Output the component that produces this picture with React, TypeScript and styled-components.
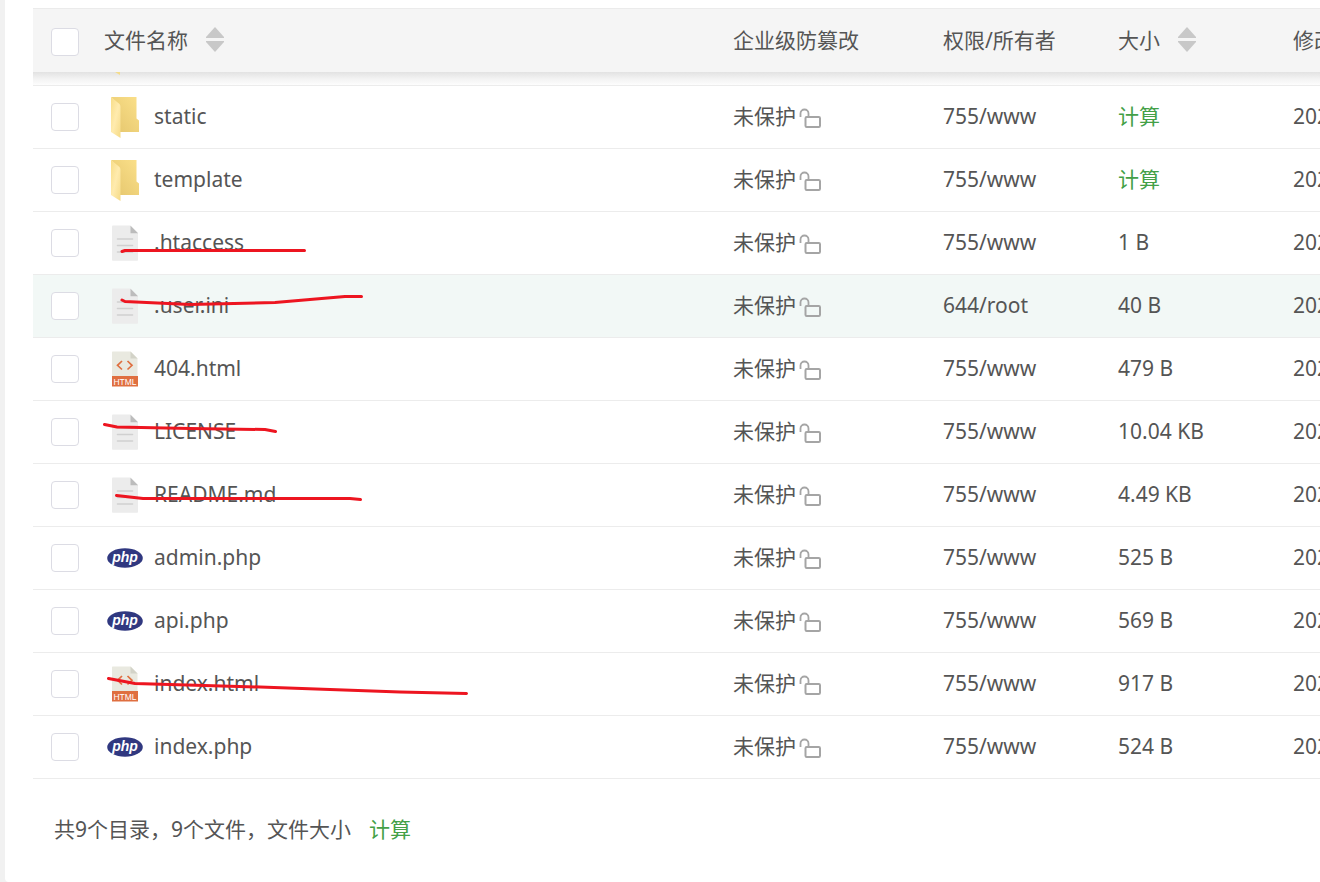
import React from "react";
import styled, { createGlobalStyle } from "styled-components";

const GlobalStyle = createGlobalStyle`
  *, *::before, *::after { box-sizing: border-box; }
  body {
    margin: 0;
    background: #f1f1f1;
    color: #555;
    font-family: "Noto Sans", "Noto Sans CJK SC", sans-serif;
    font-size: 21px;
    line-height: 28px;
    overflow-x: hidden;
  }
`;

const Panel = styled.main`
  min-height: 100vh;
  margin-left: 5px;
  padding: 8px 0 36px 28px;
  background: #fff;
  border-bottom-left-radius: 4px;
  overflow: hidden;
`;

const TableArea = styled.div`
  position: relative;
`;

const FileTable = styled.table`
  width: 100%;
  table-layout: fixed;
  border-collapse: separate;
  border-spacing: 0;
`;

const Column = styled.col<{ $width?: number }>`
  width: ${(p) => (p.$width ? `${p.$width}px` : "auto")};
`;

const HeadCell = styled.th<{ $box?: boolean }>`
  height: 64px;
  padding: ${(p) => (p.$box ? "2px 0 0" : "0 0 2px")};
  border-top: 1px solid #ebebeb;
  background: #f5f5f5;
  font-weight: 400;
  text-align: left;
  white-space: nowrap;
`;

const ScrolledCell = styled.td`
  height: 14px;
  padding: 0;
  border-bottom: 1px solid #ececec;
  background: linear-gradient(#e2e2e2, #f2f2f2 50%, #fdfdfd);
  vertical-align: top;
`;

const Row = styled.tr<{ $active?: boolean }>`
  background: ${(p) => (p.$active ? "#f2f8f6" : "#fff")};
`;

const Cell = styled.td`
  height: 63px;
  padding: 0;
  border-bottom: 1px solid #ececec;
  white-space: nowrap;
`;

const TextCell = styled(Cell)`
  padding-bottom: 2px;
`;

const CheckBox = styled.input`
  appearance: none;
  display: block;
  width: 28px;
  height: 28px;
  margin: 0 0 0 18px;
  border: 1px solid #dcdce4;
  border-radius: 4px;
  background: #fff;
  &:checked { background: #20a53a; }
`;

const SortLabel = styled.button`
  display: flex;
  align-items: center;
  gap: 18px;
  padding: 0;
  border: 0;
  background: none;
  color: inherit;
  font: inherit;
`;

const NameGroup = styled.div`
  display: flex;
  align-items: center;
  gap: 11px;
  padding-left: 3px;
`;

const FileLink = styled.a`
  padding-bottom: 2px;
  color: inherit;
  text-decoration: none;
`;

const GuardStatus = styled.div`
  display: flex;
  align-items: center;
  gap: 3px;
`;

const GuardText = styled.span`
  padding-bottom: 2px;
`;

const CalcLink = styled.a`
  color: #43a047;
  text-decoration: none;
`;

const Summary = styled.footer`
  display: flex;
  gap: 18px;
  padding: 36px 0 0 21px;
`;

const Marks = styled.svg`
  position: absolute;
  top: 0;
  left: 0;
  pointer-events: none;
`;

const Block = styled.svg`
  display: block;
  flex: none;
`;

function SortIcon() {
  return (
    <Block width="18" height="26" viewBox="0 0 18 26" fill="#c8c8c8" aria-hidden="true">
      <path d="M9 0 18 10v1H0v-1z" />
      <path d="M0 14h18v1L9 25 0 15z" />
    </Block>
  );
}

function UnlockIcon() {
  return (
    <Block width="22" height="22" viewBox="0 0 22 22" fill="none" stroke="#a5a5a5" strokeWidth="2" aria-hidden="true">
      <path d="M1.500 11V7.500a4 4 0 0 1 8 0V10" strokeWidth="1.8" />
      <rect x="6.500" y="11" width="14.500" height="10" rx="1.200" />
    </Block>
  );
}

function FolderIcon() {
  return (
    <Block width="36" height="42" viewBox="0 0 36 42" aria-hidden="true">
      <defs>
        <linearGradient id="folderBack" x1="0" y1="1" x2="1" y2="0">
          <stop offset="0" stopColor="#e4c56c" />
          <stop offset="1" stopColor="#fbe08a" />
        </linearGradient>
        <linearGradient id="folderFlap" x1="0" y1="0" x2="1" y2="1">
          <stop offset="0" stopColor="#f8dd88" />
          <stop offset="0.5" stopColor="#ffebae" />
          <stop offset="1" stopColor="#f5da86" />
        </linearGradient>
      </defs>
      <path d="M4 1h25.500v21.500l2.500 2V36H12V10z" fill="url(#folderBack)" />
      <path d="M4 1l8.500 7q1 1 1 3v31L4 36z" fill="url(#folderFlap)" />
    </Block>
  );
}

function TextFileIcon() {
  return (
    <Block width="36" height="36" viewBox="0 0 36 36" aria-hidden="true">
      <path d="M6 .5h17.500L31 8v27a.8.8 0 0 1-.8.800H5.800A.8.8 0 0 1 5 35V1.300Q5 .5 6 .5z" fill="#ececec" />
      <path d="M23.500.8 31 8.300h-7.500z" fill="#bcbcbc" />
      <path d="M10.500 14h15M10.500 20.500h15M10.500 27h15" stroke="#d0d0d0" strokeWidth="1.6" strokeLinecap="round" />
    </Block>
  );
}

function HtmlFileIcon() {
  return (
    <Block width="36" height="36" viewBox="0 0 36 36" aria-hidden="true">
      <path d="M5.500.5H23.500L30.500 7.500V25H5V1z" fill="#e9e9e0" />
      <path d="M23.500.5 30.500 7.500h-7z" fill="#d3d3c8" />
      <path d="M15 10l-4.500 4.300L15 18.500M20.500 10l4.500 4.300-4.500 4.200" fill="none" stroke="#df6f40" strokeWidth="1.700" />
      <path d="M5 25h26v10.500H5z" fill="#df6f40" />
      <text x="18" y="33.500" textAnchor="middle" fontFamily="Liberation Sans, sans-serif" fontSize="8.500" fill="#fff">HTML</text>
    </Block>
  );
}

function PhpIcon() {
  return (
    <Block width="36" height="36" viewBox="0 0 36 36" aria-hidden="true">
      <ellipse cx="18" cy="18" rx="17.800" ry="9.700" fill="#303880" />
      <text
        x="18"
        y="22"
        textAnchor="middle"
        fontFamily="Liberation Sans, sans-serif"
        fontSize="14"
        fontWeight="700"
        fontStyle="italic"
        fill="#fff"
      >
        php
      </text>
    </Block>
  );
}

const icons = { folder: FolderIcon, text: TextFileIcon, html: HtmlFileIcon, php: PhpIcon };

type FileEntry = {
  name: string;
  kind: keyof typeof icons;
  access: string;
  size?: string;
  active?: boolean;
};

const files: FileEntry[] = [
  { name: "static", kind: "folder", access: "755/www" },
  { name: "template", kind: "folder", access: "755/www" },
  { name: ".htaccess", kind: "text", access: "755/www", size: "1 B" },
  { name: ".user.ini", kind: "text", access: "644/root", size: "40 B", active: true },
  { name: "404.html", kind: "html", access: "755/www", size: "479 B" },
  { name: "LICENSE", kind: "text", access: "755/www", size: "10.04 KB" },
  { name: "README.md", kind: "text", access: "755/www", size: "4.49 KB" },
  { name: "admin.php", kind: "php", access: "755/www", size: "525 B" },
  { name: "api.php", kind: "php", access: "755/www", size: "569 B" },
  { name: "index.html", kind: "html", access: "755/www", size: "917 B" },
  { name: "index.php", kind: "php", access: "755/www", size: "524 B" },
];

function FileRow({ file }: { file: FileEntry }) {
  const Icon = icons[file.kind];
  return (
    <Row $active={file.active}>
      <Cell>
        <CheckBox type="checkbox" aria-label={file.name} />
      </Cell>
      <Cell>
        <NameGroup>
          <Icon />
          <FileLink href="#">{file.name}</FileLink>
        </NameGroup>
      </Cell>
      <Cell>
        <GuardStatus>
          <GuardText>未保护</GuardText>
          <UnlockIcon />
        </GuardStatus>
      </Cell>
      <TextCell>{file.access}</TextCell>
      <TextCell>{file.size ?? <CalcLink href="#">计算</CalcLink>}</TextCell>
      <TextCell>202</TextCell>
    </Row>
  );
}

export default function App() {
  return (
    <>
      <GlobalStyle />
      <Panel lang="zh-CN">
        <TableArea>
          <FileTable>
            <colgroup>
              <Column $width={71} />
              <Column />
              <Column $width={210} />
              <Column $width={175} />
              <Column $width={175} />
              <Column $width={27} />
            </colgroup>
            <thead>
              <tr>
                <HeadCell $box>
                  <CheckBox type="checkbox" aria-label="文件名称" />
                </HeadCell>
                <HeadCell>
                  <SortLabel type="button">
                    文件名称
                    <SortIcon />
                  </SortLabel>
                </HeadCell>
                <HeadCell>企业级防篡改</HeadCell>
                <HeadCell>权限/所有者</HeadCell>
                <HeadCell>
                  <SortLabel type="button">
                    大小
                    <SortIcon />
                  </SortLabel>
                </HeadCell>
                <HeadCell>修改</HeadCell>
              </tr>
            </thead>
            <tbody>
              <tr aria-hidden="true">
                <ScrolledCell />
                <ScrolledCell colSpan={5}>
                  <Block width="36" height="4" viewBox="0 0 36 4">
                    <path d="M11 0h5v3z" fill="#f3dc8c" />
                  </Block>
                </ScrolledCell>
              </tr>
              {files.map((file) => (
                <FileRow key={file.name} file={file} />
              ))}
            </tbody>
          </FileTable>
          <Marks
            width="480"
            height="771"
            viewBox="33 8 480 771"
            fill="none"
            stroke="#ed1520"
            strokeWidth="3"
            strokeLinecap="round"
            strokeLinejoin="round"
            aria-hidden="true"
          >
            <path d="M122 251.500 125 250.500H304.500" />
            <path d="M122 300 125 301.500 190 304.500 275 302.500 345 296.500H361.500" />
            <path d="M104.500 424.500 117 427 190 428.500 265 429.500 275.500 431.500" />
            <path d="M116.500 495.500 143 498.500H350L360.500 499.500" />
            <path d="M108.500 678.500 135 683.500 260 687 400 692 466.500 693.500" />
          </Marks>
        </TableArea>
        <Summary>
          <span>共9个目录，9个文件，文件大小</span>
          <CalcLink href="#">计算</CalcLink>
        </Summary>
      </Panel>
    </>
  );
}
